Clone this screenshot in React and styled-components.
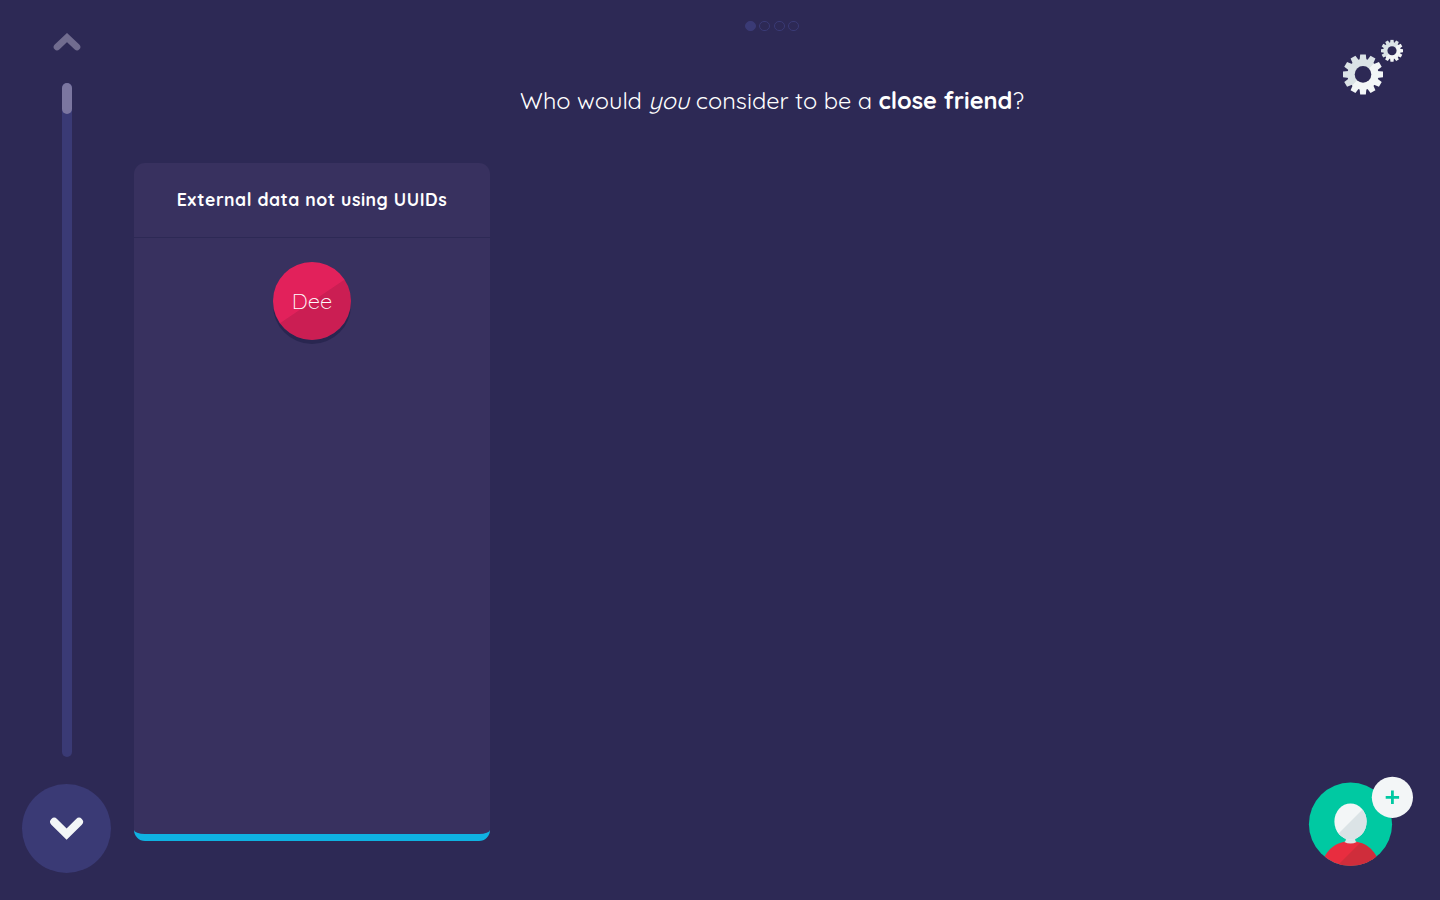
import React from 'react';
import styled, { createGlobalStyle } from 'styled-components';

const c = {
  bg: '#2d2955', panel: '#38315f', navy: '#3a3a75', cyan: '#0fb2e2',
  pink: '#e2215b', pinkDark: '#cb1e53', green: '#00c9a2', light: '#f3f6f7', grey: '#dbe3e6',
};

const Global = createGlobalStyle`
  *, *::before, *::after { box-sizing: border-box; }
  body { margin: 0; background: ${c.bg}; color: #fff; overflow: hidden; }
  body, button { font-family: Quicksand, Lato, "Liberation Sans", sans-serif; }
`;
const Page = styled.div`
  position: relative;
  display: flex;
  width: 1440px;
  height: 900px;
`;
const Timeline = styled.nav`
  display: flex;
  flex-direction: column;
  align-items: center;
  width: 134px;
  padding: 33px 1px 27px 0;
`;
const UpButton = styled.button`
  display: flex;
  align-items: flex-start;
  height: 50px;
  padding: 0;
  border: 0;
  background: none;
  svg { display: block; margin-left: 1px; }
`;
const Track = styled.div`
  width: 10px;
  height: 674px;
  margin-left: 1px;
  border-radius: 5px;
  background: ${c.navy};
`;
const Progress = styled.div`
  height: 31px;
  border-radius: 5px;
  background: #7b76a0;
`;
const DownButton = styled.button`
  display: flex;
  align-items: center;
  justify-content: center;
  width: 89px;
  height: 89px;
  margin-top: 27px;
  padding: 0;
  border: 0;
  border-radius: 50%;
  background: ${c.navy};
`;
const Main = styled.main`
  flex: 1;
  display: flex;
  flex-direction: column;
`;
const Heading = styled.header`
  display: flex;
  flex-direction: column;
  align-items: center;
  height: 163px;
  margin-left: -30px;
  padding-top: 20.6px;
`;
const Dots = styled.div`
  display: flex;
  gap: 3.8px;
`;
const Dot = styled.span`
  width: 10.8px;
  height: 10.8px;
  border: 1px solid ${c.navy};
  border-radius: 50%;
  background: ${p => (p.$active ? c.navy : 'transparent')};
`;
const Question = styled.h1`
  margin: 54px 0 0;
  font-size: 23.6px;
  line-height: 30px;
  font-weight: 400;
  white-space: nowrap;
`;
const Panel = styled.section`
  width: 356px;
  height: 678px;
  border-bottom: 7px solid ${c.cyan};
  border-radius: 11px;
  background: ${c.panel};
`;
const PanelHeader = styled.h2`
  display: flex;
  align-items: center;
  justify-content: center;
  height: 75px;
  margin: 0;
  padding-bottom: 2px;
  border-bottom: 1px solid ${c.bg};
  font-size: 17.6px;
  font-weight: 700;
  letter-spacing: 0.53px;
  white-space: nowrap;
`;
const NodeList = styled.div`
  display: flex;
  justify-content: center;
  padding-top: 24px;
`;
const Node = styled.div`
  display: flex;
  align-items: center;
  justify-content: center;
  width: 78px;
  height: 78px;
  border-radius: 50%;
  background: linear-gradient(146deg, ${c.pink} 50%, ${c.pinkDark} 50.8%);
  box-shadow: 0 4px 0 #292650;
  font-size: 22px;
  font-weight: 300;
`;
const Settings = styled.button`
  position: absolute;
  left: 1340px;
  top: 36px;
  width: 66px;
  height: 62px;
  padding: 0;
  border: 0;
  background: none;
  svg { display: block; }
`;
const AddPerson = styled.button`
  position: absolute;
  left: 1305px;
  top: 773px;
  width: 112px;
  height: 97px;
  padding: 0;
  border: 0;
  background: none;
  svg { display: block; }
`;

function Gear({ x, y, scale, id }) {
  const teeth = Array.from({ length: 12 }, (_, i) => i * 30);
  return (
    <g transform={`translate(${x} ${y}) scale(${scale})`}>
      <mask id={id} maskUnits="userSpaceOnUse" x="-21" y="-21" width="42" height="42">
        <circle r="15.5" fill="#fff" />
        {teeth.map(a => <path key={a} d="M-3.5-14L-2.8-20H2.8L3.5-14Z" fill="#fff" transform={`rotate(${a})`} />)}
        <circle r="8.3" fill="#000" />
      </mask>
      <g mask={`url(#${id})`}>
        <rect x="-21" y="-21" width="42" height="42" fill={c.grey} />
        <path d="M21-21V21H-21Z" fill={c.light} />
      </g>
    </g>
  );
}

export default function App() {
  return (
    <Page>
      <Global />
      <Timeline>
        <UpButton aria-label="Previous">
          <svg width="28" height="18" viewBox="0 0 28 18">
            <path d="M4 14L14 4.5L24 14" fill="none" stroke="#716c8f" strokeWidth="6.6" strokeLinecap="round" />
          </svg>
        </UpButton>
        <Track><Progress /></Track>
        <DownButton aria-label="Next">
          <svg width="34" height="24" viewBox="0 0 34 24">
            <path d="M4.2 4.8L16.6 17.2L29 4.8" fill="none" stroke={c.light} strokeWidth="8" strokeLinecap="round" />
          </svg>
        </DownButton>
      </Timeline>
      <Main>
        <Heading>
          <Dots><Dot $active /><Dot /><Dot /><Dot /></Dots>
          <Question>
            Who would <em>you</em> consider to be a <strong>close friend</strong>?
          </Question>
        </Heading>
        <Panel>
          <PanelHeader>External data not using UUIDs</PanelHeader>
          <NodeList><Node>Dee</Node></NodeList>
        </Panel>
      </Main>
      <Settings aria-label="Settings">
        <svg width="66" height="62" viewBox="0 0 66 62">
          <Gear x={23} y={38.4} scale={1} id="gear-large" />
          <Gear x={52} y={14.7} scale={0.55} id="gear-small" />
        </svg>
      </Settings>
      <AddPerson aria-label="Add a person">
        <svg width="112" height="97" viewBox="0 0 112 97">
          <defs>
            <clipPath id="avatar"><circle cx="45.5" cy="51.2" r="41.6" /></clipPath>
            <clipPath id="head"><ellipse cx="45.5" cy="48.5" rx="16.1" ry="18" /></clipPath>
            <clipPath id="body"><path d="M15 97C18.5 77 31 68.2 45.5 68.2S72.5 77 76 97Z" /></clipPath>
          </defs>
          <circle cx="45.5" cy="51.2" r="41.6" fill={c.green} />
          <g clipPath="url(#avatar)">
            <g clipPath="url(#body)">
              <path d="M13 65H78V97H13Z" fill="#e82d3f" />
              <path d="M67 58L28 97H80V58Z" fill="#cf2d3b" />
            </g>
          </g>
          <path d="M40.8 64H50.2V66.8C50.2 68 51 68.7 51.8 69Q45.5 72 39.2 69C40 68.7 40.8 68 40.8 66.8Z" fill={c.grey} />
          <g clipPath="url(#head)">
            <path d="M28 29H63V68H28Z" fill={c.light} />
            <path d="M65 29L27 67H65Z" fill={c.grey} />
          </g>
          <circle cx="87.4" cy="24.3" r="20.6" fill={c.light} />
          <path d="M80.7 24.3H94.1M87.4 17.6V31" stroke={c.green} strokeWidth="2.8" />
        </svg>
      </AddPerson>
    </Page>
  );
}
